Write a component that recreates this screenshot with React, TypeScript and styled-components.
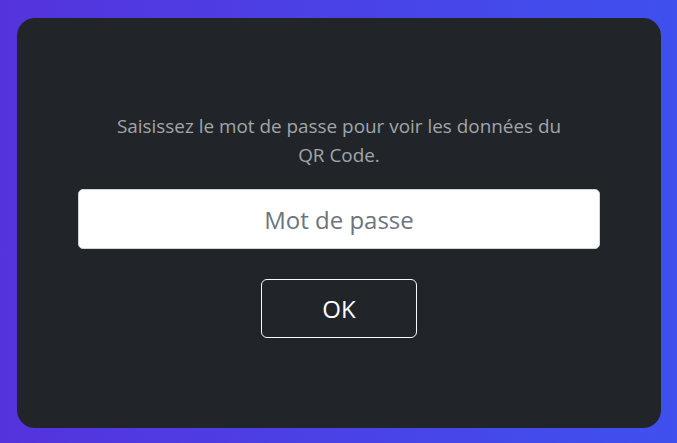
import React from 'react';
import styled, { createGlobalStyle } from 'styled-components';

const GlobalStyle = createGlobalStyle`
  html, body {
    margin: 0;
    padding: 0;
  }
  body {
    font-family: "Open Sans", "Noto Sans", sans-serif;
  }
`;

const Page = styled.div`
  box-sizing: border-box;
  width: 677px;
  height: 443px;
  padding: 18px 16px 15px 17px;
  background: linear-gradient(90deg, #5533dc 0%, #4a42e6 50%, #3f50ee 100%);
  display: flex;
`;

const Card = styled.div`
  flex: 1;
  background: #212529;
  border-radius: 18px;
  display: flex;
  flex-direction: column;
  align-items: center;
  justify-content: center;
  padding: 4px 61px 0 61px;
`;

const Message = styled.p`
  margin: 0 0 19px;
  width: 460px;
  text-align: center;
  color: #a0a5ab;
  font-size: 18.9px;
  line-height: 29px;
`;

const PasswordInput = styled.input`
  box-sizing: border-box;
  width: 100%;
  height: 60px;
  border: 1px solid #ced4da;
  border-radius: 5px;
  background: #fff;
  text-align: center;
  font-family: inherit;
  font-size: 24px;
  color: #212529;
  outline: none;

  &::placeholder {
    color: #6c757d;
  }
`;

const SubmitButton = styled.button`
  box-sizing: border-box;
  margin-top: 30px;
  width: 156px;
  height: 59px;
  border: 1px solid #f8f9fa;
  border-radius: 6px;
  background: transparent;
  color: #fff;
  font-family: inherit;
  font-size: 24px;
  cursor: pointer;
`;

export default function App() {
  return (
    <>
      <GlobalStyle />
      <Page>
        <Card>
          <Message>Saisissez le mot de passe pour voir les données du QR Code.</Message>
          <PasswordInput type="password" placeholder="Mot de passe" />
          <SubmitButton type="button">OK</SubmitButton>
        </Card>
      </Page>
    </>
  );
}
